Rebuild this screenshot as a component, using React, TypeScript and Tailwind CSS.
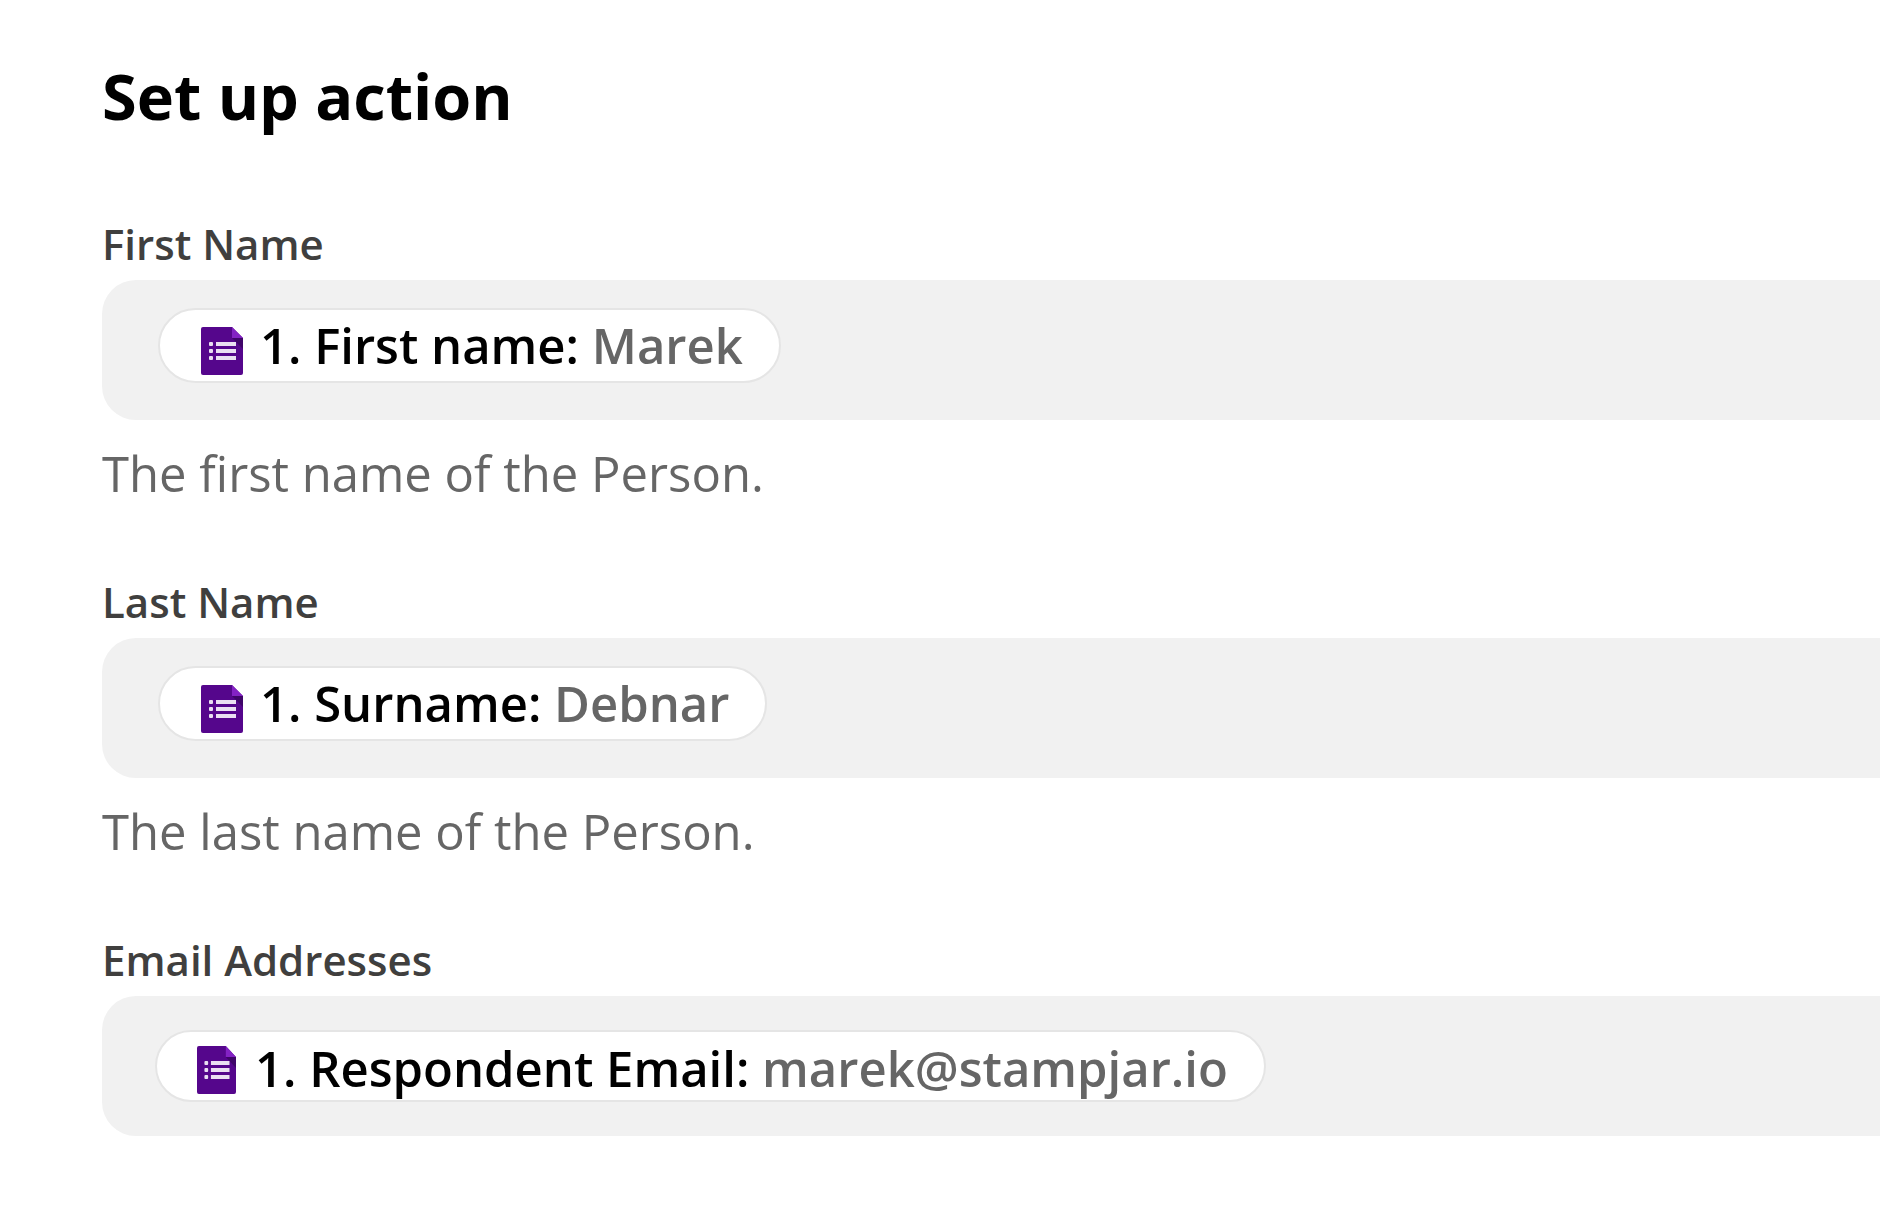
import React from "react";

import { clsx } from "clsx";

interface IField {
  id: string;
  label: string;
  tokenName: string;
  tokenValue: string;
  help?: string;
  compact?: boolean;
}

const fields: IField[] = [
  {
    id: "first-name",
    label: "First Name",
    tokenName: "1. First name:",
    tokenValue: "Marek",
    help: "The first name of the Person.",
  },
  {
    id: "last-name",
    label: "Last Name",
    tokenName: "1. Surname:",
    tokenValue: "Debnar",
    help: "The last name of the Person.",
  },
  {
    id: "email",
    label: "Email Addresses",
    tokenName: "1. Respondent Email:",
    tokenValue: "marek@stampjar.io",
    compact: true,
  },
];

const FormsIcon: React.FC<{ className?: string }> = ({ className }) => (
  <svg
    aria-hidden="true"
    className={className}
    preserveAspectRatio="none"
    viewBox="0 0 42 48"
  >
    <path
      d="M2 0H31L42 11V46a2 2 0 0 1-2 2H2a2 2 0 0 1-2-2V2a2 2 0 0 1 2-2z"
      fill="#55068c"
    />
    <path d="M31 11H42V22z" fill="#3f0569" />
    <path d="M31 0L42 11H31z" fill="#8322c4" />
    <g fill="#eadff2">
      <rect height="4" rx="1" width="4" x="8" y="15" />
      <rect height="4" rx="1" width="4" x="8" y="22" />
      <rect height="4" rx="1" width="4" x="8" y="29" />
      <rect height="4" width="20" x="15" y="15" />
      <rect height="4" width="20" x="15" y="22" />
      <rect height="4" width="20" x="15" y="29" />
    </g>
  </svg>
);

const Field: React.FC<IField> = ({
  id,
  label,
  tokenName,
  tokenValue,
  help,
  compact,
}) => (
  <div className="flex flex-col">
    <label
      className="mb-2 text-[42px] leading-14 font-semibold text-[#403f3e]"
      htmlFor={id}
    >
      {label}
    </label>
    <div
      className={clsx(
        "flex h-35 items-start rounded-l-[34px] bg-[#f1f1f1]",
        compact ? "pt-[34px] pl-[53px]" : "pt-7 pl-14"
      )}
    >
      <span
        className={clsx(
          "flex shrink-0 items-center rounded-full border-2 border-[#e5e5e5] bg-white pr-9 text-[49px] font-semibold whitespace-nowrap",
          compact ? "h-[72px] pl-10" : "h-[75px] pl-[41px]"
        )}
      >
        <FormsIcon
          className={clsx(
            "h-12 shrink-0",
            compact ? "mt-2 mr-[19px] w-[39px]" : "mt-[10px] mr-[17px] w-[42px]"
          )}
        />
        <span className={clsx("leading-none", compact && "mt-1")}>
          {tokenName} <span className="text-[#666666]">{tokenValue}</span>
        </span>
      </span>
      <input
        className="h-[75px] min-w-0 flex-1 bg-transparent px-3 text-[49px] outline-none"
        id={id}
        type="text"
      />
    </div>
    {help && (
      <p className="mt-[21px] text-[49px] leading-16 text-[#666666]">{help}</p>
    )}
  </div>
);

const App: React.FC = () => (
  <main className="min-h-screen bg-white pt-14 pb-16 pl-[102px] font-['Open_Sans',sans-serif] text-black">
    <h1 className="text-[63px] leading-20 font-bold">Set up action</h1>
    <form className="mt-20 flex flex-col gap-[69px]">
      {fields.map((field) => (
        <Field key={field.id} {...field} />
      ))}
    </form>
  </main>
);

export default App;
